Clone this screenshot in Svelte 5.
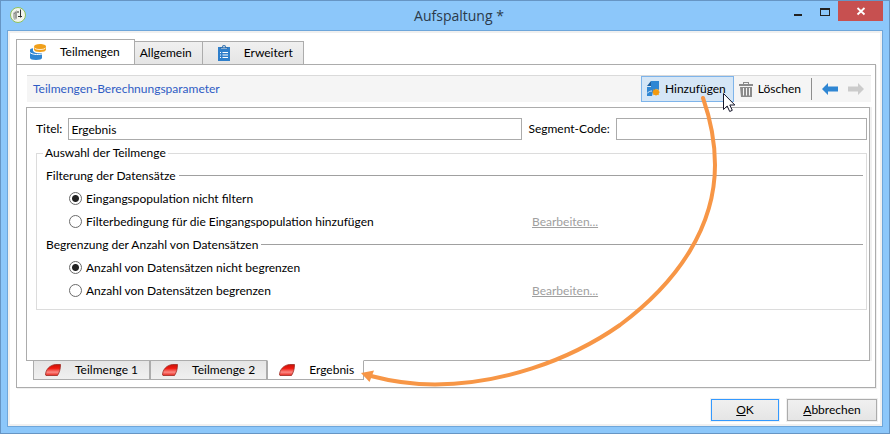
<script>
  let title = $state('Ergebnis');
  let code = $state('');
  let filter = $state('none');
  let limit = $state('none');
  const subsets = ['Teilmenge 1', 'Teilmenge 2', 'Ergebnis'];
  let current = $state(2);
</script>

<div class="window">
  <header class="titlebar">
    <svg class="app-icon" width="18" height="18" viewBox="0 0 18 18" aria-hidden="true">
      <circle cx="9" cy="9" r="7.5" fill="#f1f4ec" stroke="#8fc25a" />
      <path d="M4 7l4-3v9l-3 1-1-3z" fill="#b4b7b1" />
      <path d="M5 8l2-2v6" fill="none" stroke="#888" />
      <path d="M11.500 3.500v8M9 10.500h4M9 5v2" fill="none" stroke="#30332f" />
    </svg>
    <h1>Aufspaltung *</h1>
    <div class="controls">
      <button class="ctl" aria-label="Minimieren">
        <svg width="12" height="12" viewBox="0 0 12 12"><path d="M2 9h8v2H2z" fill="#222" /></svg>
      </button>
      <button class="ctl" aria-label="Maximieren">
        <svg width="12" height="12" viewBox="0 0 12 12"><path d="M1 3h10v8H1zM2 5v5h8V5z" fill="#222" fill-rule="evenodd" /></svg>
      </button>
      <button class="ctl close" aria-label="Schließen">
        <svg width="10" height="10" viewBox="0 0 10 10"><path d="M1.500 2l7 6.500M8.500 2l-7 6.500" stroke="#fff" stroke-width="1.800" /></svg>
      </button>
    </div>
  </header>

  <main class="client">
    <nav class="tabs">
      <button class="tab active">
        <svg width="18" height="18" viewBox="0 0 18 18" aria-hidden="true">
          <path d="M1 7c0-1 1.500-1.800 3-1.800v2.500c1 2 4 2.800 9 2.500v4.800c0 1.300-2.500 2-6 2S1 16.300 1 15v-4z" fill="#2f86d3" />
          <path d="M1 9.500c2 2 7 2.500 12 1.500" fill="none" stroke="#fff" />
          <path d="M5 3.500C5 2 7.500 1 11 1s6 1 6 2.500v3C17 8.200 14.500 9 11 9S5 8.200 5 6.500z" fill="#f0a01c" />
          <path d="M5 4.500C6 6 8 6.500 11 6.500s5-.5 6-2" fill="none" stroke="#fff" stroke-width=".8" />
        </svg>
        <span>Teilmengen</span>
      </button>
      <button class="tab">Allgemein</button>
      <button class="tab">
        <svg width="18" height="18" viewBox="0 0 18 18" aria-hidden="true">
          <path d="M3 3h3v2h6V3h3v14H3z" fill="#2f7fcb" />
          <path d="M5 4.500h8V3h-2a2 2 0 0 0-4 0H5z" fill="#2f6fae" />
          <circle cx="9" cy="2.800" r=".8" fill="#fff" />
          <path d="M5 8.500h1M7.500 8.500H13M5 11h1M7.500 11H13M5 13.500h1M7.500 13.500H13" stroke="#fff" />
        </svg>
        <span>Erweitert</span>
      </button>
    </nav>

    <section class="panel">
      <div class="toolbar">
        <h2>Teilmengen-Berechnungsparameter</h2>
        <button class="tool add">
          <svg width="14" height="18" viewBox="0 0 14 18" aria-hidden="true">
            <path d="M5 1h8v9l-3-1-3 3-1 4H1V7h4z" fill="#2f86d3" />
            <path d="M1 6l4-5v5z" fill="#1d5d9c" />
            <path d="M1 13.500c1.500-2 3.500-2.500 5-2.500" stroke="#d5e6f6" fill="none" />
            <path d="M10 8.500l1 1.500 1.800-.8-.2 2 1.400.8-1.400 1.200.2 2-1.800-.7-1 1.500-1-1.500-1.800.7.200-2L6 12l1.400-.8-.2-2L9 10z" fill="#f39a0e" />
            <circle cx="10" cy="12.200" r="2.800" fill="#f39a0e" />
          </svg>
          <span>Hinzufügen</span>
        </button>
        <button class="tool">
          <svg width="14" height="18" viewBox="0 0 14 18" aria-hidden="true">
            <path d="M0 4h14v2H0zM4 4V2h6v2H9V3H5v1zM1 7h12v10H2z" fill="#8b8b8b" />
            <path d="M4.500 8v7.500M7.500 8v7.500M10.500 8v7.500" stroke="#f5f5f5" />
          </svg>
          <span>Löschen</span>
        </button>
        <span class="divider"></span>
        <button class="arrow" aria-label="Zurück">
          <svg width="18" height="14" viewBox="0 0 18 14"><path d="M1 7l6-6v3.500h10v5H7V13z" fill="#2f86d3" /></svg>
        </button>
        <button class="arrow" aria-label="Vor" disabled>
          <svg width="18" height="14" viewBox="0 0 18 14"><path d="M17 7l-6-6v3.500H1v5h10V13z" fill="#cbcbcb" /></svg>
        </button>
      </div>

      <div class="sheet">
        <div class="fields">
          <label for="title">Titel:</label>
          <input id="title" class="text wide" type="text" bind:value={title} />
          <label for="code">Segment-Code:</label>
          <input id="code" class="text" type="text" bind:value={code} />
        </div>

        <fieldset>
          <legend>Auswahl der Teilmenge</legend>

          <h3>Filterung der Datensätze</h3>
          <div class="option">
            <label><input type="radio" name="filter" value="none" bind:group={filter} />Eingangspopulation nicht filtern</label>
          </div>
          <div class="option">
            <label><input type="radio" name="filter" value="add" bind:group={filter} />Filterbedingung für die Eingangspopulation hinzufügen</label>
            <a href="#filter">Bearbeiten...</a>
          </div>

          <h3>Begrenzung der Anzahl von Datensätzen</h3>
          <div class="option">
            <label><input type="radio" name="limit" value="none" bind:group={limit} />Anzahl von Datensätzen nicht begrenzen</label>
          </div>
          <div class="option">
            <label><input type="radio" name="limit" value="set" bind:group={limit} />Anzahl von Datensätzen begrenzen</label>
            <a href="#limit">Bearbeiten...</a>
          </div>
        </fieldset>
      </div>

      <nav class="subtabs">
        {#each subsets as name, i}
          <button class="subtab" class:active={i === current} onclick={() => (current = i)}>
            <svg width="16" height="14" viewBox="0 0 16 14" aria-hidden="true">
              <defs>
                <linearGradient id="red{i}" x1="0" y1="0" x2="0" y2="1">
                  <stop offset="0" stop-color="#c81208" />
                  <stop offset=".35" stop-color="#f01a10" />
                  <stop offset=".7" stop-color="#fb8a84" />
                  <stop offset="1" stop-color="#e8251c" />
                </linearGradient>
              </defs>
              <path d="M.5 12c0-5 4-10 10-10.500h5c0 4-1 8-3 11H1z" fill="url(#red{i})" stroke="#9a2a22" stroke-width=".8" />
            </svg>
            <span>{name}</span>
          </button>
        {/each}
      </nav>
    </section>

    <footer>
      <button class="push default"><span><u>O</u>K</span></button>
      <button class="push cancel"><span><u>A</u>bbrechen</span></button>
    </footer>
  </main>

  <svg class="overlay" width="890" height="434" viewBox="0 0 890 434" aria-hidden="true">
    <path d="M703 98C710 118 715 142 715 165C715 226 679 281 620 325C567 362 500 384 435 384.500C412 384.500 390 381 371 376" fill="none" stroke="#f79646" stroke-width="4" stroke-linecap="round" stroke-linejoin="round" />
    <path d="M361 373l13-2.500-4.500 11.500z" fill="#f79646" />
    <path d="M723.500 93.500v16l3.700-3.500 2.500 5.500 2.600-1.200-2.500-5.300h5z" fill="#fff" stroke="#16162a" />
  </svg>
</div>

<style>
  :global(body) {
    margin: 0;
  }
  .window {
    position: relative;
    box-sizing: border-box;
    display: flex;
    flex-direction: column;
    min-height: 100vh;
    padding: 0 6px 6px;
    border: 1px solid #6695c4;
    background: #8cc7fa;
    color: #000;
    font: 12px/16px Lato, 'Open Sans', sans-serif;
  }
  button,
  input {
    font: inherit;
    color: inherit;
  }
  button {
    margin: 0;
    padding: 0;
    border: 0;
    background: none;
    white-space: nowrap;
  }
  svg {
    display: block;
    flex: none;
  }
  h1,
  h2,
  h3 {
    margin: 0;
    font-weight: 400;
  }
  .titlebar {
    display: grid;
    grid-template-columns: 1fr auto 1fr;
    height: 29px;
  }
  .app-icon {
    margin: 5px 0 0 2px;
  }
  h1 {
    padding-left: 28px;
    color: #2b3a4a;
    font-family: 'Open Sans', 'Noto Sans', sans-serif;
    font-size: 14px;
    line-height: 30px;
  }
  .controls {
    display: flex;
    justify-content: flex-end;
  }
  .ctl {
    display: flex;
    align-items: center;
    justify-content: center;
    width: 27px;
    height: 20px;
  }
  .close {
    width: 45px;
    background: #c75050;
  }
  .client {
    display: flex;
    flex: 1;
    flex-direction: column;
    padding: 8px 5px 5px 6px;
    border: 1px solid #6ea6da;
    box-shadow: inset 0 0 0 2px #f0f0f0;
    background: #fff;
  }
  .tabs {
    display: flex;
    align-items: flex-end;
    margin: 0 0 -1px 2px;
  }
  .tab {
    box-sizing: border-box;
    display: flex;
    align-items: center;
    gap: 11px;
    height: 24px;
    margin-left: -1px;
    padding: 0 10px 0 12px;
    border: 1px solid #acacac;
    background: linear-gradient(#f0f0f0, #e5e5e5);
  }
  .tab:nth-child(2) {
    padding: 0 10px 0 5px;
  }
  .tab.active {
    height: 26px;
    margin-left: 0;
    padding: 0 14px 0 12px;
    gap: 13px;
    border-bottom-color: #fff;
    background: #fff;
  }
  .panel {
    flex: 1;
    margin: 0 1px 0 2px;
    padding: 10px 5px 7px 9px;
    border: 1px solid #acacac;
    box-shadow: 1px 1px 0 #f0f0f0;
  }
  .toolbar {
    display: flex;
    align-items: center;
    height: 26px;
    margin: 0 -1px 5px 1px;
    padding: 0 6px 0 6px;
    border-top: 1px solid #dadada;
    background: #f5f5f5;
  }
  h2 {
    flex: 1;
    color: #2f5cc4;
    font-size: 12px;
  }
  .tool {
    box-sizing: border-box;
    display: flex;
    align-items: center;
    gap: 5px;
    height: 26px;
    padding: 0 4px;
    border: 1px solid transparent;
  }
  .add {
    border-color: #7eb4ea;
    background: #d5e6f6;
    padding: 0 7px 0 4px;
  }
  .divider {
    width: 1px;
    height: 22px;
    margin: 0 9px 0 5px;
    background: #8e8e8e;
  }
  .arrow + .arrow {
    margin-left: 8px;
  }
  .sheet {
    height: 233px;
    padding: 10px 2px 9px 9px;
    border: 1px solid #acacac;
    box-shadow: 2px 0 0 #f0f0f0;
  }
  .fields {
    display: flex;
    align-items: center;
    gap: 6px;
  }
  .text {
    box-sizing: border-box;
    flex: 249 1 0;
    min-width: 0;
    height: 22px;
    padding: 0 2px;
    border: 1px solid #ababab;
    background: #fff;
    outline: 0;
  }
  .wide {
    flex-grow: 455;
  }
  fieldset {
    min-width: 0;
    margin: 5px 0 0;
    padding: 0 3px 7px 9px;
    border: 1px solid #dcdcdc;
  }
  legend {
    margin-left: -3px;
    padding: 0 2px;
  }
  h3 {
    display: flex;
    align-items: center;
    gap: 3px;
    height: 23px;
    font-size: 12px;
    line-height: 23px;
  }
  h3::after {
    flex: 1;
    height: 1px;
    background: #a0a0a0;
    content: '';
  }
  legend + h3 {
    margin-top: 3px;
  }
  .option {
    display: flex;
    align-items: center;
    height: 23px;
    padding-left: 23px;
  }
  .option label {
    display: flex;
    align-items: center;
    gap: 4px;
    width: 463px;
  }
  .option input {
    box-sizing: border-box;
    width: 13px;
    height: 13px;
    margin: 0;
    border: 1px solid #6a6a6a;
    border-radius: 50%;
    background: #fff;
    appearance: none;
  }
  .option input:checked {
    background: radial-gradient(circle, #222 3px, #fff 4px);
  }
  .option a {
    color: #a0a0a0;
  }
  .subtabs {
    display: flex;
    margin: -1px 0 0 7px;
  }
  .subtab {
    box-sizing: border-box;
    display: flex;
    align-items: center;
    gap: 14px;
    height: 20px;
    padding: 0 11px;
    border: 1px solid #acacac;
    background: linear-gradient(#e5e5e5, #f0f0f0);
  }
  .subtab.active {
    padding-right: 9px;
    border-color: #fff #acacac #acacac;
    background: #fff;
  }
  footer {
    display: flex;
    justify-content: flex-end;
    gap: 8px;
    margin: 11px 0 0;
  }
  .push {
    box-sizing: border-box;
    width: 68px;
    height: 22px;
    border: 1px solid #acacac;
    background: linear-gradient(#f0f0f0, #e5e5e5);
    box-shadow: 0 0 0 1px #f0f0f0;
  }
  .default {
    border-color: #3399ff;
  }
  .cancel {
    width: 90px;
  }
  .overlay {
    position: absolute;
    top: -1px;
    left: -1px;
    pointer-events: none;
  }
</style>
